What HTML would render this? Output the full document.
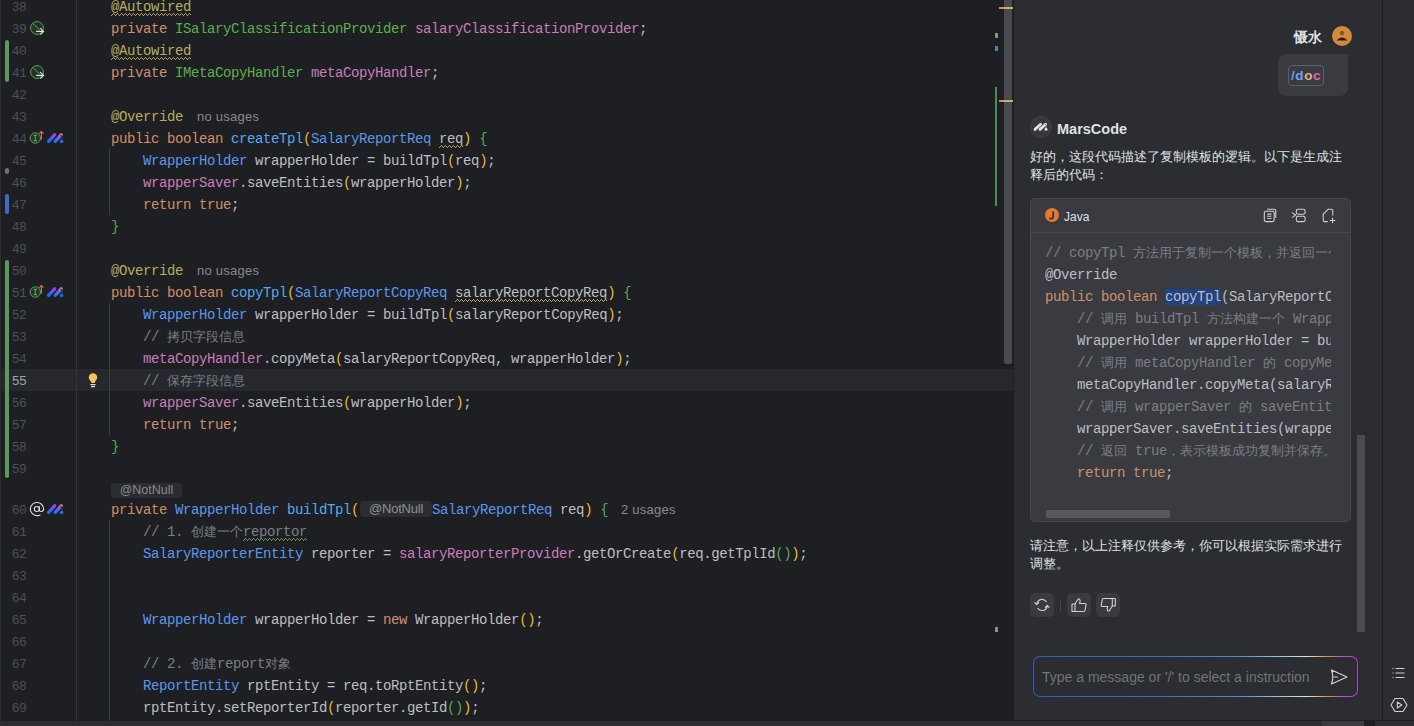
<!DOCTYPE html>
<html><head><meta charset="utf-8">
<style>
*{margin:0;padding:0;box-sizing:border-box}
html,body{width:1414px;height:726px;overflow:hidden;background:#1E1F22;font-family:"Liberation Sans",sans-serif}
.abs{position:absolute}
#ed{position:absolute;left:0;top:0;width:1014px;height:721px;background:#1E1F22;overflow:hidden}
.ln{position:absolute;left:0;width:26px;margin-top:2px;text-align:right;font:13px/22px "Liberation Mono",monospace;letter-spacing:-0.7px;color:#4B5059}
.ln.cur{color:#A1A3AB}
.cl{position:absolute;left:111px;margin-top:1px;white-space:pre;font:14px/22px "Liberation Mono",monospace;letter-spacing:-0.4px;color:#BCBEC4}
.k{color:#CF8E6D}.a{color:#B3AE60}.i{color:#5DAE4E}.t{color:#5A96EE}.m{color:#56A8F5}.f{color:#C77DBB}.y{color:#E8BA36}.g{color:#54A857}.c{color:#7A7E85}
.cj{display:inline-block;width:13px;font-size:12.5px;color:#7A7E85;text-align:center}
.hint{position:absolute;top:0;font:13px/22px "Liberation Sans",sans-serif;letter-spacing:0.25px;color:#868A91;white-space:nowrap}
.inl{display:inline-block;width:72px;height:16px;line-height:16px;margin-left:1px;background:#2B2D30;border-radius:4px;font:13px/16px "Liberation Sans",sans-serif;color:#8C9096;text-align:center;vertical-align:1px;letter-spacing:-0.2px}
.u,.uw,.uw2{position:relative}
.u::after,.uw::after,.uw2::after{content:"";position:absolute;left:0;right:0;top:14px;height:3px;background:repeating-linear-gradient(90deg,transparent 0 2px,var(--w) 2px 3px,transparent 3px 4px) 0 0/100% 1px no-repeat,repeating-linear-gradient(90deg,transparent 0 1px,var(--w) 1px 2px) 0 1px/100% 1px no-repeat,repeating-linear-gradient(90deg,var(--w) 0 1px,transparent 1px 4px) 0 2px/100% 1px no-repeat}
.u,.uw{--w:#B9A35C}
.uw2{--w:#5E9E5E}
#chat{position:absolute;left:1014px;top:0;width:369px;height:720px;background:#2B2D30;overflow:hidden}
#strip{position:absolute;left:1382px;top:0;width:32px;height:720px;background:#2B2D30;border-left:1px solid #1E1F22}
#bottom{position:absolute;left:0;top:721px;width:1414px;height:5px;background:#2B2D30}
.cbl{position:absolute;left:15px;margin-top:1px;white-space:pre;font:14px/22px "Liberation Mono",monospace;letter-spacing:-0.4px;color:#BCBEC4}
.cbl .cj{font-size:12.5px}
.txt{position:absolute;left:16px;font:13px/18px "Liberation Sans",sans-serif;color:#DFE1E5;white-space:nowrap}
.btn{position:absolute;top:593px;width:24px;height:24px;border-radius:5px;background:#393B40}
</style></head><body>
<div id="ed">
  <!-- left border -->
  <div class="abs" style="left:0;top:0;width:1px;height:721px;background:#2B2D30"></div>
  <!-- current line highlight -->
  <div class="abs" style="left:2px;top:369px;width:1012px;height:22px;background:#26282E"></div>
  <!-- gutter separator -->
  <div class="abs" style="left:76px;top:0;width:1px;height:721px;background:#313438"></div>
  <!-- change bars -->
  <div class="abs" style="left:5px;top:40px;width:4px;height:42px;background:#5A9B5D;border-radius:2px"></div>
  <div class="abs" style="left:5px;top:168px;width:4px;height:6px;background:#6F737A;border-radius:2px"></div>
  <div class="abs" style="left:5px;top:194px;width:4px;height:20px;background:#3F6CC6;border-radius:2px"></div>
  <div class="abs" style="left:5px;top:260px;width:4px;height:218px;background:#5A9B5D;border-radius:2px"></div>
  <!-- indent guides -->
  <div class="abs" style="left:109px;top:149px;width:1px;height:66px;background:#344632"></div>
  <div class="abs" style="left:109px;top:303px;width:1px;height:132px;background:#344632"></div>
  <div class="abs" style="left:109px;top:520px;width:1px;height:201px;background:#344632"></div>
  <!-- gutter icons -->
  <svg class="abs" style="left:28px;top:19px" width="20" height="18" viewBox="0 0 20 18">
    <circle cx="9" cy="9" r="6.4" fill="#243325" stroke="#55A35B" stroke-width="1"/>
    <line x1="4.6" y1="4.4" x2="11.6" y2="10.8" stroke="#55A35B" stroke-width="1"/>
    <path d="M8.1 12.4 H15.6 M12.2 9.1 L15.6 12.4 L12.2 15.7" stroke="#DFE1E5" stroke-width="1.1" fill="none"/>
  </svg>
  <svg class="abs" style="left:28px;top:63px" width="20" height="18" viewBox="0 0 20 18">
    <circle cx="9" cy="9" r="6.4" fill="#243325" stroke="#55A35B" stroke-width="1"/>
    <line x1="4.6" y1="4.4" x2="11.6" y2="10.8" stroke="#55A35B" stroke-width="1"/>
    <path d="M8.1 12.4 H15.6 M12.2 9.1 L15.6 12.4 L12.2 15.7" stroke="#DFE1E5" stroke-width="1.1" fill="none"/>
  </svg>
  <svg width="0" height="0" style="position:absolute"><defs>
    <linearGradient id="mg1" x1="0" y1="1" x2="1" y2="0"><stop offset="0" stop-color="#1F6CF2"/><stop offset="1" stop-color="#9B3CF5"/></linearGradient>
    <linearGradient id="mg2" x1="0" y1="1" x2="1" y2="0"><stop offset="0" stop-color="#2370F0"/><stop offset="0.6" stop-color="#7A60F0"/><stop offset="1" stop-color="#E87A70"/></linearGradient>
  </defs></svg>
  <svg class="abs" style="left:28px;top:128px" width="40" height="20" viewBox="0 0 40 20">
    <circle cx="7.3" cy="10" r="5.2" fill="#243325" stroke="#55A35B" stroke-width="1"/>
    <path d="M5.6 7.4 H9 M7.3 7.4 V12.6 M5.6 12.6 H9" stroke="#55A35B" stroke-width="1.1" fill="none"/>
    <path d="M13.4 11.5 V3.5 M11.3 5.6 L13.4 3.5 L15.5 5.6" stroke="#E06C5A" stroke-width="1.1" fill="none"/>
    <path d="M20.6 13.4 L26.6 6.8" stroke="url(#mg1)" stroke-width="3.3" stroke-linecap="round"/>
    <path d="M27.2 13.4 L33.2 6.8" stroke="url(#mg2)" stroke-width="3.3" stroke-linecap="round"/>
    <path d="M33.2 6.8 L34 13.6" stroke="#1C3E8A" stroke-width="1.6"/>
    <circle cx="33.6" cy="13.5" r="1.8" fill="#1D6BF0"/>
  </svg>
  <svg class="abs" style="left:28px;top:282px" width="40" height="20" viewBox="0 0 40 20">
    <circle cx="7.3" cy="10" r="5.2" fill="#243325" stroke="#55A35B" stroke-width="1"/>
    <path d="M5.6 7.4 H9 M7.3 7.4 V12.6 M5.6 12.6 H9" stroke="#55A35B" stroke-width="1.1" fill="none"/>
    <path d="M13.4 11.5 V3.5 M11.3 5.6 L13.4 3.5 L15.5 5.6" stroke="#E06C5A" stroke-width="1.1" fill="none"/>
    <path d="M20.6 13.4 L26.6 6.8" stroke="url(#mg1)" stroke-width="3.3" stroke-linecap="round"/>
    <path d="M27.2 13.4 L33.2 6.8" stroke="url(#mg2)" stroke-width="3.3" stroke-linecap="round"/>
    <path d="M33.2 6.8 L34 13.6" stroke="#1C3E8A" stroke-width="1.6"/>
    <circle cx="33.6" cy="13.5" r="1.8" fill="#1D6BF0"/>
  </svg>
  <svg class="abs" style="left:28px;top:499px" width="40" height="20" viewBox="0 0 40 20">
    <circle cx="8.8" cy="10" r="2.5" fill="none" stroke="#DFE1E5" stroke-width="1.1"/>
    <path d="M11.4 7.3 V11 Q11.4 12.6 13.3 12.5 Q15.6 12.2 15.6 10 A6.6 6.6 0 1 0 12.4 15.7" stroke="#DFE1E5" stroke-width="1.1" fill="none"/>
    <path d="M20.6 13.4 L26.6 6.8" stroke="url(#mg1)" stroke-width="3.3" stroke-linecap="round"/>
    <path d="M27.2 13.4 L33.2 6.8" stroke="url(#mg2)" stroke-width="3.3" stroke-linecap="round"/>
    <path d="M33.2 6.8 L34 13.6" stroke="#1C3E8A" stroke-width="1.6"/>
    <circle cx="33.6" cy="13.5" r="1.8" fill="#1D6BF0"/>
  </svg>
  <!-- bulb -->
  <svg class="abs" style="left:86px;top:371px" width="14" height="18" viewBox="0 0 14 18">
    <circle cx="7" cy="6.5" r="4.2" fill="#F2C55C"/>
    <path d="M4.3 8.5 L5.3 12 H8.7 L9.7 8.5 Z" fill="#F2C55C"/>
    <rect x="4.5" y="13" width="5" height="1.2" fill="#DFE1E5"/>
    <rect x="5" y="15" width="4" height="1.2" fill="#DFE1E5"/>
  </svg>
  <!-- @NotNull block inlay -->
  <div class="abs" style="left:111px;top:483px;width:71px;height:15px;background:#2B2D30;border-radius:3px;font:12.5px/15px 'Liberation Sans',sans-serif;color:#868A91;text-align:center">@NotNull</div>
  <div class="ln" style="top:-5px">38</div>
<div class="cl" style="top:-5px"><span class="a u">@Autowired</span></div>
<div class="ln" style="top:17px">39</div>
<div class="cl" style="top:17px"><span class="k">private </span><span class="i">ISalaryClassificationProvider </span><span class="f">salaryClassificationProvider</span>; </div>
<div class="ln" style="top:39px">40</div>
<div class="cl" style="top:39px"><span class="a u">@Autowired</span></div>
<div class="ln" style="top:61px">41</div>
<div class="cl" style="top:61px"><span class="k">private </span><span class="i">IMetaCopyHandler </span><span class="f">metaCopyHandler</span>;</div>
<div class="ln" style="top:83px">42</div>
<div class="cl" style="top:83px"></div>
<div class="ln" style="top:105px">43</div>
<div class="cl" style="top:105px"><span class="a">@Override</span><span class="hint" style="left:86px">no usages</span></div>
<div class="ln" style="top:127px">44</div>
<div class="cl" style="top:127px"><span class="k">public boolean </span><span class="m">createTpl</span><span class="y">(</span><span class="t">SalaryReportReq </span><span class="uw">req</span><span class="y">)</span> <span class="g">{</span></div>
<div class="ln" style="top:149px">45</div>
<div class="cl" style="top:149px">    <span class="t">WrapperHolder</span> wrapperHolder = buildTpl<span class="y">(</span>req<span class="y">)</span>;</div>
<div class="ln" style="top:171px">46</div>
<div class="cl" style="top:171px">    <span class="f">wrapperSaver</span>.saveEntities<span class="y">(</span>wrapperHolder<span class="y">)</span>;</div>
<div class="ln" style="top:193px">47</div>
<div class="cl" style="top:193px">    <span class="k">return true</span>;</div>
<div class="ln" style="top:215px">48</div>
<div class="cl" style="top:215px"><span class="g">}</span></div>
<div class="ln" style="top:237px">49</div>
<div class="cl" style="top:237px"></div>
<div class="ln" style="top:259px">50</div>
<div class="cl" style="top:259px"><span class="a">@Override</span><span class="hint" style="left:86px">no usages</span></div>
<div class="ln" style="top:281px">51</div>
<div class="cl" style="top:281px"><span class="k">public boolean </span><span class="m">copyTpl</span><span class="y">(</span><span class="t">SalaryReportCopyReq </span><span class="uw">salaryReportCopyReq</span><span class="y">)</span> <span class="g">{</span></div>
<div class="ln" style="top:303px">52</div>
<div class="cl" style="top:303px">    <span class="t">WrapperHolder</span> wrapperHolder = buildTpl<span class="y">(</span>salaryReportCopyReq<span class="y">)</span>;</div>
<div class="ln" style="top:325px">53</div>
<div class="cl" style="top:325px">    <span class="c">// </span><span class="cj">拷</span><span class="cj">贝</span><span class="cj">字</span><span class="cj">段</span><span class="cj">信</span><span class="cj">息</span></div>
<div class="ln" style="top:347px">54</div>
<div class="cl" style="top:347px">    <span class="f">metaCopyHandler</span>.copyMeta<span class="y">(</span>salaryReportCopyReq, wrapperHolder<span class="y">)</span>;</div>
<div class="ln cur" style="top:369px">55</div>
<div class="cl" style="top:369px">    <span class="c">// </span><span class="cj">保</span><span class="cj">存</span><span class="cj">字</span><span class="cj">段</span><span class="cj">信</span><span class="cj">息</span></div>
<div class="ln" style="top:391px">56</div>
<div class="cl" style="top:391px">    <span class="f">wrapperSaver</span>.saveEntities<span class="y">(</span>wrapperHolder<span class="y">)</span>;</div>
<div class="ln" style="top:413px">57</div>
<div class="cl" style="top:413px">    <span class="k">return true</span>;</div>
<div class="ln" style="top:435px">58</div>
<div class="cl" style="top:435px"><span class="g">}</span></div>
<div class="ln" style="top:457px">59</div>
<div class="cl" style="top:457px"></div>
<div class="ln" style="top:498px">60</div>
<div class="cl" style="top:498px"><span class="k">private </span><span class="t">WrapperHolder </span><span class="m">buildTpl</span><span class="y">(</span><span class="inl">@NotNull</span><span class="t">SalaryReportReq </span>req<span class="y">)</span> <span class="g">{</span><span class="hint" style="left:510px">2 usages</span></div>
<div class="ln" style="top:520px">61</div>
<div class="cl" style="top:520px">    <span class="c">// 1. </span><span class="cj">创</span><span class="cj">建</span><span class="cj">一</span><span class="cj">个</span><span class="c uw2">reportor</span></div>
<div class="ln" style="top:542px">62</div>
<div class="cl" style="top:542px">    <span class="t">SalaryReporterEntity</span> reporter = <span class="f">salaryReporterProvider</span>.getOrCreate<span class="y">(</span>req.getTplId<span class="g">()</span><span class="y">)</span>;</div>
<div class="ln" style="top:564px">63</div>
<div class="cl" style="top:564px"></div>
<div class="ln" style="top:586px">64</div>
<div class="cl" style="top:586px"></div>
<div class="ln" style="top:608px">65</div>
<div class="cl" style="top:608px">    <span class="t">WrapperHolder</span> wrapperHolder = <span class="k">new</span> WrapperHolder<span class="y">()</span>;</div>
<div class="ln" style="top:630px">66</div>
<div class="cl" style="top:630px"></div>
<div class="ln" style="top:652px">67</div>
<div class="cl" style="top:652px">    <span class="c">// 2. </span><span class="cj">创</span><span class="cj">建</span><span class="c">report</span><span class="cj">对</span><span class="cj">象</span></div>
<div class="ln" style="top:674px">68</div>
<div class="cl" style="top:674px">    <span class="t">ReportEntity</span> rptEntity = req.toRptEntity<span class="y">()</span>;</div>
<div class="ln" style="top:696px">69</div>
<div class="cl" style="top:696px">    rptEntity.setReporterId<span class="y">(</span>reporter.getId<span class="g">()</span><span class="y">)</span>;</div>
  <!-- scrollbar & markers -->
  <div class="abs" style="left:1004px;top:0;width:8px;height:364px;background:#4A4B4E;border-radius:0 0 2px 2px"></div>
  <div class="abs" style="left:999px;top:7px;width:4px;height:2px;background:#E08855"></div>
  <div class="abs" style="left:1003px;top:7px;width:10px;height:2px;background:#C9B06A"></div>
  <div class="abs" style="left:999px;top:100px;width:4px;height:2px;background:#E08855"></div>
  <div class="abs" style="left:1003px;top:100px;width:10px;height:2px;background:#C9B06A"></div>
  <div class="abs" style="left:995px;top:33px;width:3px;height:5px;background:#8C8F86"></div>
  <div class="abs" style="left:995px;top:46px;width:3px;height:5px;background:#4F80B5"></div>
  <div class="abs" style="left:995px;top:87px;width:2px;height:119px;background:#4F8E5A"></div>
  <div class="abs" style="left:995px;top:627px;width:3px;height:5px;background:#8C8F86"></div>
  <div class="abs" style="left:1013px;top:0;width:1px;height:721px;background:#1E1F22"></div>
</div>
<div id="chat">
  <!-- user -->
  <div class="abs" style="left:280px;top:28px;font:bold 14px/18px 'Liberation Sans',sans-serif;color:#DFE1E5;white-space:nowrap">慑水</div>
  <svg class="abs" style="left:318px;top:26px" width="20" height="20" viewBox="0 0 20 20">
    <circle cx="10" cy="10" r="10" fill="#D18B3F"/>
    <circle cx="10" cy="7" r="2.3" fill="#8A5520"/>
    <path d="M4.5 14.5 Q10 8.5 15.5 14.5 Z" fill="#2A1A0A"/>
  </svg>
  <div class="abs" style="left:264px;top:54px;width:70px;height:42px;background:#393B40;border-radius:8px 0 8px 8px"></div>
  <div class="abs" style="left:274px;top:65px;width:36px;height:21px;border:1px solid #56606E;border-radius:4px;font:bold 13.5px/19px 'Liberation Sans',sans-serif;letter-spacing:0.6px;text-align:center;white-space:nowrap"><span style="color:#5E9BEB">/</span><span style="color:#6AA5F0">d</span><span style="color:#E3B08C">o</span><span style="color:#E06AA8">c</span></div>
  <!-- MarsCode -->
  <svg class="abs" style="left:16px;top:116px" width="22" height="22" viewBox="0 0 22 22">
    <circle cx="11" cy="11" r="10.5" fill="#36383C" stroke="#404246" stroke-width="1"/>
    <path d="M5 13.4 L10.6 8.3" stroke="#DFE1E5" stroke-width="2.8" stroke-linecap="round"/>
    <path d="M10 13.4 L15.6 8.3" stroke="#DFE1E5" stroke-width="2.8" stroke-linecap="round"/>
    <path d="M15.6 8.3 L16.2 13.4" stroke="#9A9CA0" stroke-width="1.2"/>
    <circle cx="16" cy="13.3" r="1.5" fill="#DFE1E5"/>
  </svg>
  <div class="abs" style="left:43px;top:120px;font:bold 14.5px/18px 'Liberation Sans',sans-serif;color:#DFE1E5">MarsCode</div>
  <div class="txt" style="top:148px">好的，这段代码描述了复制模板的逻辑。以下是生成注</div>
  <div class="txt" style="top:166px">释后的代码：</div>
  <!-- code block -->
  <div class="abs" style="left:16px;top:198px;width:321px;height:324px;background:#393B40;border:1px solid #46484C;border-radius:5px;overflow:hidden">
    <div class="abs" style="left:0;top:33px;width:321px;height:1px;background:#45474B"></div>
  </div>
  <svg class="abs" style="left:31px;top:208px" width="14" height="14" viewBox="0 0 14 14">
    <circle cx="7" cy="7" r="7" fill="#E3782F"/>
    <path d="M8.2 3.6 V8.6 Q8.2 10.6 6.2 10.6 Q5 10.6 4.5 9.8" stroke="#2B2D30" stroke-width="1.6" fill="none"/>
  </svg>
  <div class="abs" style="left:50px;top:208.5px;font:12px/16px 'Liberation Sans',sans-serif;color:#DFE1E5">Java</div>
  <svg class="abs" style="left:248px;top:207px" width="90" height="17" viewBox="0 0 90 17">
    <g fill="none" stroke="#CED0D6" stroke-width="1.1">
      <rect x="2.3" y="4.2" width="9.9" height="10.4" rx="1.6"/>
      <path d="M5 2.2 H12.2 Q13.8 2.2 13.8 3.8 V11"/>
      <path d="M5.3 7.1 H9.4 M5.3 9.3 H9.4 M5.3 11.5 H9.4"/>
      <path d="M29.9 5.6 L33.7 8.1 L29.9 10.6"/>
      <rect x="34.3" y="2.2" width="8.8" height="5" rx="1.6"/>
      <rect x="34.3" y="9.3" width="8.8" height="5.3" rx="1.6"/>
      <path d="M65.8 14.6 H62.6 Q61.2 14.6 61.2 13.2 V7.1 L66.3 2.2 H69.4 Q70.8 2.2 70.8 3.6 V8.6"/>
      <path d="M67.9 13.5 H73.3 M70.6 10.8 V16.2"/>
    </g>
  </svg>
  <div class="abs" style="left:16px;top:233px;width:301px;height:288px;overflow:hidden">
<div class="cbl" style="top:8px"><span class="c">// copyTpl </span><span class="cj">方</span><span class="cj">法</span><span class="cj">用</span><span class="cj">于</span><span class="cj">复</span><span class="cj">制</span><span class="cj">一</span><span class="cj">个</span><span class="cj">模</span><span class="cj">板</span><span class="cj">，</span><span class="cj">并</span><span class="cj">返</span><span class="cj">回</span><span class="cj">一</span><span class="cj">个</span></div>
<div class="cbl" style="top:30px">@Override</div>
<div class="cbl" style="top:52px"><span class="k">public boolean </span><span style="background:#214283">copyTpl</span>(SalaryReportCopyReq salaryReportCopyReq)</div>
<div class="cbl" style="top:74px">    <span class="c">// </span><span class="cj">调</span><span class="cj">用</span><span class="c"> buildTpl </span><span class="cj">方</span><span class="cj">法</span><span class="cj">构</span><span class="cj">建</span><span class="cj">一</span><span class="cj">个</span><span class="c"> WrapperHolder</span></div>
<div class="cbl" style="top:96px">    WrapperHolder wrapperHolder = buildTpl(salaryReportCopyReq);</div>
<div class="cbl" style="top:118px">    <span class="c">// </span><span class="cj">调</span><span class="cj">用</span><span class="c"> metaCopyHandler </span><span class="cj">的</span><span class="c"> copyMeta</span></div>
<div class="cbl" style="top:140px">    metaCopyHandler.copyMeta(salaryReportCopyReq, wrapperHolder);</div>
<div class="cbl" style="top:162px">    <span class="c">// </span><span class="cj">调</span><span class="cj">用</span><span class="c"> wrapperSaver </span><span class="cj">的</span><span class="c"> saveEntities</span></div>
<div class="cbl" style="top:184px">    wrapperSaver.saveEntities(wrapperHolder);</div>
<div class="cbl" style="top:206px">    <span class="c">// </span><span class="cj">返</span><span class="cj">回</span><span class="c"> true</span><span class="cj">，</span><span class="cj">表</span><span class="cj">示</span><span class="cj">模</span><span class="cj">板</span><span class="cj">成</span><span class="cj">功</span><span class="cj">复</span><span class="cj">制</span><span class="cj">并</span><span class="cj">保</span><span class="cj">存</span><span class="cj">。</span></div>
<div class="cbl" style="top:228px">    <span class="k">return true</span>;</div>
  </div>
  <div class="abs" style="left:32px;top:510px;width:124px;height:8px;background:#57585C;border-radius:1px"></div>
  <div class="txt" style="top:537px">请注意，以上注释仅供参考，你可以根据实际需求进行</div>
  <div class="txt" style="top:555px">调整。</div>
  <!-- buttons -->
  <div class="btn" style="left:16px"></div>
  <div class="abs" style="left:46px;top:599px;width:1px;height:13px;background:#43454A"></div>
  <div class="btn" style="left:53px"></div>
  <div class="btn" style="left:82px"></div>
  <svg class="abs" style="left:16px;top:593px" width="104" height="24" viewBox="0 0 104 24">
    <g fill="none" stroke="#CED0D6" stroke-width="1.1" stroke-linejoin="round" stroke-linecap="round">
      <path d="M6.8 10.5 A5.3 5.3 0 0 1 16.3 8.6"/>
      <path d="M4.8 9.6 L6.8 11.6 L8.8 9.6"/>
      <path d="M17.2 13.5 A5.3 5.3 0 0 1 7.8 15.4"/>
      <path d="M15.2 14.4 L17.2 12.4 L19.2 14.4"/>
      <path d="M42 11 H45 V18.5 H42 Z"/>
      <path d="M45 11 L48 6.3 Q48.6 5.5 49.4 6.1 Q50.3 6.9 50.1 8.1 L49.6 10.5 H54.8 Q56.3 10.5 56 12 L55.1 17.2 Q54.8 18.5 53.5 18.5 H45"/>
      <g transform="translate(127.3,24) rotate(180)">
      <path d="M42 11 H45 V18.5 H42 Z"/>
      <path d="M45 11 L48 6.3 Q48.6 5.5 49.4 6.1 Q50.3 6.9 50.1 8.1 L49.6 10.5 H54.8 Q56.3 10.5 56 12 L55.1 17.2 Q54.8 18.5 53.5 18.5 H45"/>
      </g>
    </g>
  </svg>
  <!-- chat scrollbar -->
  <div class="abs" style="left:343px;top:435px;width:8px;height:197px;background:#4A4C50"></div>
  <!-- input -->
  <div class="abs" style="left:19px;top:656px;width:325px;height:41px;border-radius:7px;background:linear-gradient(90deg,#2E5EBE 0%,#3570CC 40%,#4C8AD8 62%,#9CC0E2 76%,#E2E2E2 84%,#D8955A 90%,#C455B0 95%,#A23ED8 100%)"></div>
  <div class="abs" style="left:20px;top:657px;width:323px;height:39px;border-radius:6px;background:#2B2D30"></div>
  <div class="abs" style="left:28px;top:668px;font:14px/18px 'Liberation Sans',sans-serif;color:#6F737A;white-space:nowrap">Type a message or '/' to select a instruction</div>
  <svg class="abs" style="left:314px;top:667px" width="22" height="20" viewBox="0 0 22 20">
    <path d="M3.5 3 L19 10 L3.5 17 Q6 10 3.5 3 Z M5.6 10 H10" fill="none" stroke="#CED0D6" stroke-width="1.2" stroke-linejoin="round"/>
  </svg>

</div>
<div id="strip">
  <svg class="abs" style="left:8px;top:665px" width="16" height="16" viewBox="0 0 16 16">
    <g stroke="#CED0D6" stroke-width="1.1" fill="none">
      <path d="M4.5 3.5 H13.5 M4.5 8 H13.5 M4.5 12.5 H13.5"/>
      <path d="M1.5 3.5 H2.5 M1.5 8 H2.5 M1.5 12.5 H2.5"/>
    </g>
  </svg>
  <svg class="abs" style="left:7px;top:696px" width="18" height="18" viewBox="0 0 18 18">
    <g stroke="#CED0D6" stroke-width="1.1" fill="none" stroke-linejoin="round">
      <path d="M5 2.5 H13 L17 9 L13 15.5 H5 L1 9 Z"/>
      <path d="M7.3 6 L11.8 9 L7.3 12 Z"/>
    </g>
  </svg>

</div>
<div id="bottom"></div>
<div class="abs" style="left:1014px;top:720px;width:400px;height:1px;background:#1E1F22"></div>
<div class="abs" style="left:1322px;top:721px;width:42px;height:5px;background:#393B40"></div>
<div class="abs" style="left:1364px;top:721px;width:11px;height:5px;background:#1E1F22"></div>
</body></html>
